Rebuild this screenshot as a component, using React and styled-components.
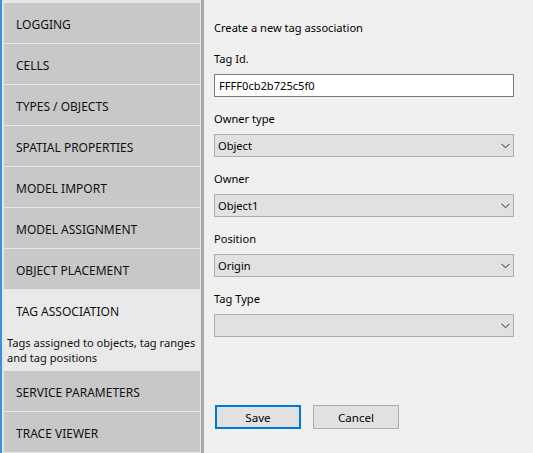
import React from "react";
import styled, { createGlobalStyle } from "styled-components";

const Global = createGlobalStyle`
  html, body { margin: 0; padding: 0; background: #f0f0f0; }
  body {
    font-family: "Noto Sans", "Open Sans", "Liberation Sans", sans-serif;
    font-size: 11.1px;
    color: #000;
  }
  * { box-sizing: border-box; }
`;

const Window = styled.div`
  display: flex;
  width: 533px;
  height: 453px;
  overflow: hidden;
  background: #f0f0f0;
`;

const Sidebar = styled.nav`
  display: flex;
  flex-direction: column;
  gap: 1px;
  width: 201px;
  padding: 3px 1px 0 2px;
  border-left: 2px solid #3d8fe0;
  background: #e6e6e6;
  flex-shrink: 0;
  overflow: hidden;
`;

const Splitter = styled.div`
  width: 3px;
  background: #a9a9a9;
  flex-shrink: 0;
`;

const MenuItem = styled.div`
  display: flex;
  flex-direction: column;
  background: ${(p) => (p.$active ? "#e9e9e9" : "#c8c8c8")};
  flex-shrink: 0;
`;

const MenuHeader = styled.div`
  height: 40px;
  display: flex;
  align-items: center;
  padding: 2px 0 0 12px;
  color: #111;
  font-size: 12px;
  text-transform: uppercase;
  white-space: nowrap;
`;

const MenuDesc = styled.div`
  height: 40px;
  padding: 5px 0 0 3px;
  line-height: 15px;
  color: #111;
  font-size: 11.1px;
  white-space: nowrap;
`;

const Panel = styled.main`
  flex: 1;
  display: flex;
  flex-direction: column;
  padding: 20px 19px 0 10px;
`;

const Heading = styled.div`
  line-height: 16px;
  margin-bottom: 15px;
`;

const Field = styled.div`
  display: flex;
  flex-direction: column;
  margin-bottom: 14px;
`;

const Label = styled.label`
  line-height: 16px;
  margin-bottom: 7px;
`;

const TextInput = styled.input`
  height: 23px;
  width: 100%;
  border: 1px solid #7a7a7a;
  background: #fff;
  padding: 0 0 0 4px;
  font: inherit;
  color: #000;
  outline: none;
`;

const Select = styled.div`
  height: 23px;
  display: flex;
  align-items: center;
  justify-content: space-between;
  border: 1px solid #adadad;
  background: #e1e1e1;
  padding: 0 3px 0 3px;
`;

const Chevron = () => (
  <svg width="9" height="6" viewBox="0 0 9 6" style={{ marginTop: 1 }}>
    <polyline points="0.5,0.8 4.5,4.6 8.5,0.8" fill="none" stroke="#606060" strokeWidth="1.1" />
  </svg>
);

const Buttons = styled.div`
  display: flex;
  gap: 12px;
  margin-top: 54px;
  padding-left: 1px;
`;

const Button = styled.button`
  width: 86px;
  height: 24px;
  font: inherit;
  font-size: 11.6px;
  color: #000;
  background: #e1e1e1;
  border: ${(p) => (p.$primary ? "2px solid #0078d7" : "1px solid #adadad")};
  padding: 0;
  cursor: pointer;
`;

const items = [
  "Logging",
  "Cells",
  "Types / Objects",
  "Spatial properties",
  "Model import",
  "Model assignment",
  "Object placement",
  "Tag association",
  "Service parameters",
  "Trace viewer",
];

const SelectField = ({ label, value }) => (
  <Field>
    <Label>{label}</Label>
    <Select>
      <span>{value}</span>
      <Chevron />
    </Select>
  </Field>
);

export default function App() {
  return (
    <Window>
      <Global />
      <Sidebar>
        {items.map((it) =>
          it === "Tag association" ? (
            <MenuItem key={it} $active>
              <MenuHeader>{it}</MenuHeader>
              <MenuDesc>
                Tags assigned to objects, tag ranges
                <br />
                and tag positions
              </MenuDesc>
            </MenuItem>
          ) : (
            <MenuItem key={it}>
              <MenuHeader>{it}</MenuHeader>
            </MenuItem>
          )
        )}
      </Sidebar>
      <Splitter />
      <Panel>
        <Heading>Create a new tag association</Heading>
        <Field>
          <Label>Tag Id.</Label>
          <TextInput defaultValue="FFFF0cb2b725c5f0" />
        </Field>
        <SelectField label="Owner type" value="Object" />
        <SelectField label="Owner" value="Object1" />
        <SelectField label="Position" value="Origin" />
        <SelectField label="Tag Type" value="" />
        <Buttons>
          <Button $primary>Save</Button>
          <Button>Cancel</Button>
        </Buttons>
      </Panel>
    </Window>
  );
}
